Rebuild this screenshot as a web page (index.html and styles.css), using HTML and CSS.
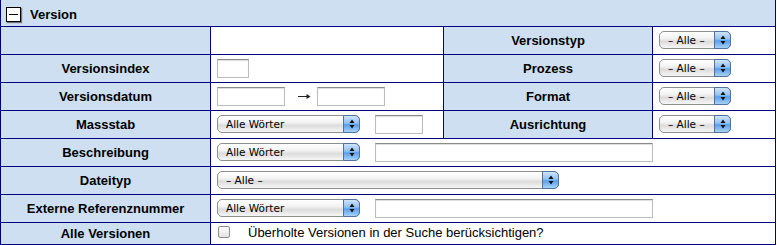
FILE: index.html
```html
<!DOCTYPE html>
<html>
<head>
  <link rel="stylesheet" href="styles.css">
</head>
<body>
  <table class="search">
    <colgroup>
      <col class="col-label">
      <col class="col-value">
      <col class="col-label2">
      <col class="col-value2">
    </colgroup>
    <tr class="head">
      <th colspan="4"><span class="toggle"></span>Version</th>
    </tr>
    <tr>
      <th class="label"></th>
      <td class="value"></td>
      <th class="label">Versionstyp</th>
      <td class="value">
        <span class="aqua small"><select><option>– Alle –</option></select><span class="aqua-btn"><svg width="6" height="10" viewBox="0 0 6 10"><path d="M3 0.5 L5.5 4 H0.5 Z M3 9.5 L5.5 6 H0.5 Z" fill="#111"/></svg></span></span>
      </td>
    </tr>
    <tr>
      <th class="label">Versionsindex</th>
      <td class="value"><input class="text tiny" type="text"></td>
      <th class="label">Prozess</th>
      <td class="value">
        <span class="aqua small"><select><option>– Alle –</option></select><span class="aqua-btn"><svg width="6" height="10" viewBox="0 0 6 10"><path d="M3 0.5 L5.5 4 H0.5 Z M3 9.5 L5.5 6 H0.5 Z" fill="#111"/></svg></span></span>
      </td>
    </tr>
    <tr>
      <th class="label">Versionsdatum</th>
      <td class="value">
        <input class="text date" type="text"><svg class="arrow" width="13" height="7" viewBox="0 0 13 7"><path d="M0 3.5 H11" stroke="#222" stroke-width="1"/><path d="M8.5 1 L12.5 3.5 L8.5 6 Z" fill="#222"/></svg><input class="text date" type="text">
      </td>
      <th class="label">Format</th>
      <td class="value">
        <span class="aqua small"><select><option>– Alle –</option></select><span class="aqua-btn"><svg width="6" height="10" viewBox="0 0 6 10"><path d="M3 0.5 L5.5 4 H0.5 Z M3 9.5 L5.5 6 H0.5 Z" fill="#111"/></svg></span></span>
      </td>
    </tr>
    <tr>
      <th class="label">Massstab</th>
      <td class="value">
        <span class="aqua words"><select><option>Alle Wörter</option></select><span class="aqua-btn"><svg width="6" height="10" viewBox="0 0 6 10"><path d="M3 0.5 L5.5 4 H0.5 Z M3 9.5 L5.5 6 H0.5 Z" fill="#111"/></svg></span></span><input class="text scale" type="text">
      </td>
      <th class="label">Ausrichtung</th>
      <td class="value">
        <span class="aqua small"><select><option>– Alle –</option></select><span class="aqua-btn"><svg width="6" height="10" viewBox="0 0 6 10"><path d="M3 0.5 L5.5 4 H0.5 Z M3 9.5 L5.5 6 H0.5 Z" fill="#111"/></svg></span></span>
      </td>
    </tr>
    <tr>
      <th class="label">Beschreibung</th>
      <td class="value" colspan="3">
        <span class="aqua words"><select><option>Alle Wörter</option></select><span class="aqua-btn"><svg width="6" height="10" viewBox="0 0 6 10"><path d="M3 0.5 L5.5 4 H0.5 Z M3 9.5 L5.5 6 H0.5 Z" fill="#111"/></svg></span></span><input class="text wide" type="text">
      </td>
    </tr>
    <tr>
      <th class="label">Dateityp</th>
      <td class="value" colspan="3">
        <span class="aqua long"><select><option>– Alle –</option></select><span class="aqua-btn"><svg width="6" height="10" viewBox="0 0 6 10"><path d="M3 0.5 L5.5 4 H0.5 Z M3 9.5 L5.5 6 H0.5 Z" fill="#111"/></svg></span></span>
      </td>
    </tr>
    <tr>
      <th class="label">Externe Referenznummer</th>
      <td class="value" colspan="3">
        <span class="aqua words"><select><option>Alle Wörter</option></select><span class="aqua-btn"><svg width="6" height="10" viewBox="0 0 6 10"><path d="M3 0.5 L5.5 4 H0.5 Z M3 9.5 L5.5 6 H0.5 Z" fill="#111"/></svg></span></span><input class="text wide" type="text">
      </td>
    </tr>
    <tr class="last">
      <th class="label">Alle Versionen</th>
      <td class="value" colspan="3">
        <label class="check"><input type="checkbox">Überholte Versionen in der Suche berücksichtigen?</label>
      </td>
    </tr>
  </table>
</body>
</html>
```

FILE: styles.css
```css
body {
  margin: 0;
  background: #fff;
  font-family: "Liberation Sans", Arial, sans-serif;
  font-size: 13px;
  color: #000;
}
.search {
  border-collapse: collapse;
  table-layout: fixed;
  width: 775px;
  border: 1px solid #000080;
}
.col-label { width: 210px; }
.col-value { width: 233px; }
.col-label2 { width: 209px; }
.col-value2 { width: 123px; }

.search th,
.search td {
  border: 1px solid #000080;
  padding: 0;
  height: 27px;
  vertical-align: middle;
}
.head th {
  border-top: hidden;
  height: 26px;
  background: #cddff0;
  text-align: left;
  font-weight: bold;
  padding: 3px 0 0 5px;
  box-sizing: border-box;
}
.toggle {
  display: inline-block;
  vertical-align: -3px;
  width: 13px;
  height: 13px;
  margin-right: 9px;
  border: 1px solid #000;
  background: #fff linear-gradient(#000, #000) no-repeat 2px 6px / 9px 1px;
  box-shadow: 1px 1px 1px #777;
}
.label {
  background: #cddff0;
  font-weight: bold;
  text-align: center;
}
.value {
  background: #fff;
  padding-left: 5px !important;
  white-space: nowrap;
}
.last th,
.last td {
  height: 21px;
}

/* aqua style popup menus */
.aqua {
  position: relative;
  display: inline-block;
  vertical-align: middle;
  height: 18px;
  margin-left: 1px;
}
.aqua.small { width: 72px; }
.aqua.words { width: 143px; }
.aqua.long { width: 342px; }
.aqua select {
  appearance: none;
  -webkit-appearance: none;
  box-sizing: border-box;
  width: 100%;
  height: 100%;
  margin: 0;
  border: 1px solid #8e8e8e;
  border-radius: 5px;
  padding: 0 20px 0 8px;
  background: linear-gradient(#ffffff, #f3f3f3 40%, #dcdcdc 60%, #f6f6f6);
  font-family: "DejaVu Sans", sans-serif;
  font-size: 10.5px;
  color: #000;
}
.aqua-btn {
  position: absolute;
  top: 0;
  right: 0;
  box-sizing: border-box;
  width: 17px;
  height: 18px;
  border: 1px solid #52719c;
  border-radius: 0 5px 5px 0;
  background: linear-gradient(#cfe4fb, #8fc0f3 45%, #5a9ee9 55%, #a7d2fa);
  display: flex;
  align-items: center;
  justify-content: center;
}

/* text fields */
.text {
  box-sizing: border-box;
  height: 19px;
  margin: 0;
  padding: 0 2px;
  vertical-align: middle;
  border: 1px solid #bcbcbc;
  border-top-color: #8a8a8a;
  box-shadow: inset 0 1px 1px #dcdcdc;
  background: #fff;
  font-size: 11px;
}
.text.tiny { width: 32px; margin-left: 1px; }
.text.date { width: 68px; margin-left: 1px; }
.text.scale { width: 48px; margin-left: 15px; }
.text.wide { width: 278px; margin-left: 15px; }
.arrow {
  vertical-align: middle;
  margin: 0 5px 0 13px;
}

.check {
  display: inline-flex;
  align-items: center;
}
.check input {
  appearance: none;
  -webkit-appearance: none;
  width: 12px;
  height: 12px;
  margin: 0 18px 0 2px;
  border: 1px solid #8e8e8e;
  border-radius: 2px;
  background: linear-gradient(#fdfdfd, #e2e2e2);
}
```
